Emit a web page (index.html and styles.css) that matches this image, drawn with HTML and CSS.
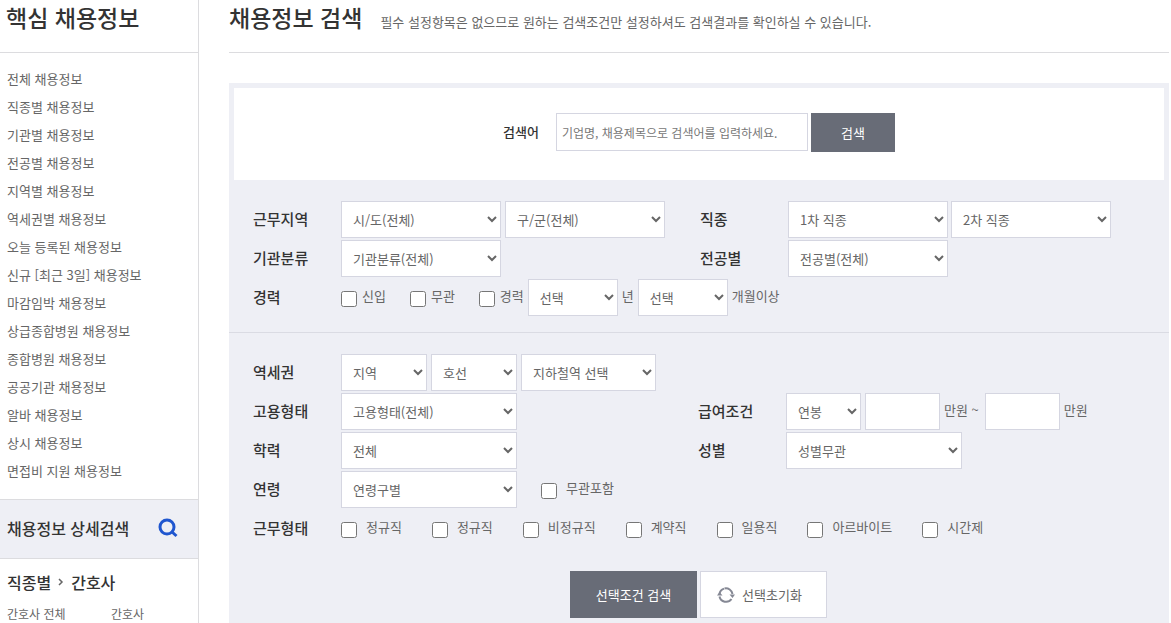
FILE: index.html
```html
<!DOCTYPE html>
<html lang="ko">
<head>
<meta charset="utf-8">
<title>채용정보 검색</title>
<link rel="stylesheet" href="styles.css">
</head>
<body>
<div class="page">
  <aside class="side">
    <h2 class="side-title">핵심 채용정보</h2>
    <ul class="side-menu">
      <li><a href="#">전체 채용정보</a></li>
      <li><a href="#">직종별 채용정보</a></li>
      <li><a href="#">기관별 채용정보</a></li>
      <li><a href="#">전공별 채용정보</a></li>
      <li><a href="#">지역별 채용정보</a></li>
      <li><a href="#">역세권별 채용정보</a></li>
      <li><a href="#">오늘 등록된 채용정보</a></li>
      <li><a href="#">신규 [최근 3일] 채용정보</a></li>
      <li><a href="#">마감임박 채용정보</a></li>
      <li><a href="#">상급종합병원 채용정보</a></li>
      <li><a href="#">종합병원 채용정보</a></li>
      <li><a href="#">공공기관 채용정보</a></li>
      <li><a href="#">알바 채용정보</a></li>
      <li><a href="#">상시 채용정보</a></li>
      <li><a href="#">면접비 지원 채용정보</a></li>
    </ul>
    <a class="side-search" href="#">채용정보 상세검색
      <svg width="20" height="20" viewBox="0 0 20 20" fill="none" stroke="#1f56cf" stroke-width="3"><circle cx="9" cy="9" r="7"/><path d="M13.500 13.500L18.500 18"/></svg>
    </a>
    <h3 class="side-sub">직종별
      <svg width="6" height="8" viewBox="0 0 6 8" fill="none" stroke="#666" stroke-width="1.500"><path d="M1 1l3 3-3 3"/></svg>
      간호사</h3>
    <div class="side-links"><a href="#">간호사 전체</a><a href="#">간호사</a></div>
  </aside>

  <main class="main">
    <header class="head">
      <h1>채용정보 검색</h1>
      <p>필수 설정항목은 없으므로 원하는 검색조건만 설정하셔도 검색결과를 확인하실 수 있습니다.</p>
    </header>
    <form class="panel">
      <div class="keyword">
        <label for="kw">검색어</label>
        <input id="kw" class="box" type="text" placeholder="기업명, 채용제목으로 검색어를 입력하세요.">
        <button class="dark" type="button">검색</button>
      </div>

      <section class="group group-top">
        <label class="name" for="sido">근무지역</label>
        <div class="field">
          <select id="sido" class="box w160"><option>시/도(전체)</option></select>
          <select aria-label="구/군" class="box w160"><option>구/군(전체)</option></select>
        </div>
        <label class="name" for="job1">직종</label>
        <div class="field tight">
          <select id="job1" class="box w160"><option>1차 직종</option></select>
          <select aria-label="2차 직종" class="box w160"><option>2차 직종</option></select>
        </div>
        <label class="name" for="org">기관분류</label>
        <div class="field"><select id="org" class="box w160"><option>기관분류(전체)</option></select></div>
        <label class="name" for="major">전공별</label>
        <div class="field"><select id="major" class="box w160"><option>전공별(전체)</option></select></div>
        <span class="name">경력</span>
        <div class="field wide">
          <div class="career">
            <label class="check"><input type="checkbox"><span>신입</span></label>
            <label class="check"><input type="checkbox"><span>무관</span></label>
            <label class="check"><input type="checkbox"><span>경력</span></label>
          </div>
          <select id="yr" class="box w90"><option>선택</option></select>
          <label class="unit" for="yr">년</label>
          <select id="mon" class="box w90"><option>선택</option></select>
          <label class="unit" for="mon">개월이상</label>
        </div>
      </section>

      <section class="group group-bottom">
        <label class="name" for="st">역세권</label>
        <div class="field wide">
          <select id="st" class="box w86"><option>지역</option></select>
          <select aria-label="호선" class="box w86"><option>호선</option></select>
          <select aria-label="지하철역" class="box w135"><option>지하철역 선택</option></select>
        </div>
        <label class="name" for="emp">고용형태</label>
        <div class="field"><select id="emp" class="box w176"><option>고용형태(전체)</option></select></div>
        <label class="name" for="pay">급여조건</label>
        <div class="field">
          <select id="pay" class="box w75"><option>연봉</option></select>
          <input id="pmin" class="box w75" type="text">
          <label class="unit" for="pmin">만원 ~</label>
          <input id="pmax" class="box w75" type="text">
          <label class="unit" for="pmax">만원</label>
        </div>
        <label class="name" for="edu">학력</label>
        <div class="field"><select id="edu" class="box w176"><option>전체</option></select></div>
        <label class="name" for="sex">성별</label>
        <div class="field"><select id="sex" class="box w176"><option>성별무관</option></select></div>
        <label class="name" for="age">연령</label>
        <div class="field wide age">
          <select id="age" class="box w176"><option>연령구별</option></select>
          <label class="check"><input type="checkbox"><span>무관포함</span></label>
        </div>
        <span class="name">근무형태</span>
        <div class="field wide types">
          <label class="check"><input type="checkbox"><span>정규직</span></label>
          <label class="check"><input type="checkbox"><span>정규직</span></label>
          <label class="check"><input type="checkbox"><span>비정규직</span></label>
          <label class="check"><input type="checkbox"><span>계약직</span></label>
          <label class="check"><input type="checkbox"><span>일용직</span></label>
          <label class="check"><input type="checkbox"><span>아르바이트</span></label>
          <label class="check"><input type="checkbox"><span>시간제</span></label>
        </div>
      </section>

      <div class="actions">
        <button class="dark" type="button">선택조건 검색</button>
        <button class="light" type="button">
          <svg width="18" height="18" viewBox="0 0 18 18" fill="none" stroke="#858894" stroke-width="2"><path d="M2.500 8A6.700 6.700 0 0 1 7 2.600"/><path d="M7.500 2.500A6.700 6.700 0 0 1 15.500 8"/><path d="M2.500 10.500A6.700 6.700 0 0 0 14.500 13"/><path d="M0 9.500L2.500 6l3 3.500zM12.500 8.500H18L15.500 12z" fill="#858894" stroke="none"/></svg>
          선택초기화</button>
      </div>
    </form>
  </main>
</div>
</body>
</html>
```
FILE: styles.css
```css
* { box-sizing: border-box; }
body {
  margin: 0;
  background: #fff;
  color: #666;
  font: 13px/20px "Noto Sans CJK KR", sans-serif;
}
h1, h2, h3, p, ul { margin: 0; padding: 0; }
ul { list-style: none; }
a { color: inherit; text-decoration: none; }
input, select, button { font: inherit; color: inherit; margin: 0; }

.page { display: flex; height: 100vh; overflow: hidden; }

.side { flex: 0 0 199px; border-right: 1px solid #dcdcdf; }
.side-title {
  height: 53px;
  padding-left: 6px;
  border-bottom: 1px solid #dcdcdf;
  color: #333;
  font-size: 23px;
  font-weight: 500;
  line-height: 35px;
}
.side-menu { padding: 12px 0 14px 7px; line-height: 28px; }
.side-search {
  display: flex;
  align-items: center;
  justify-content: space-between;
  height: 60px;
  padding: 0 20px 2px 7px;
  border: solid #dcdcdf;
  border-width: 1px 0;
  background: #eeeff5;
  color: #333;
  font-size: 16px;
  font-weight: 500;
}
.side-sub {
  display: flex;
  align-items: center;
  gap: 7px;
  padding: 11px 7px 10px;
  color: #333;
  font-size: 16px;
  font-weight: 500;
  line-height: 24px;
}
.side-links {
  display: grid;
  grid-template-columns: 104px 1fr;
  padding-left: 7px;
  font-size: 12px;
}

.main { flex: 1; display: flex; flex-direction: column; padding: 0 2px 0 30px; }
.head {
  display: flex;
  align-items: baseline;
  gap: 18px;
  flex: none;
  height: 53px;
  margin-bottom: 30px;
  border-bottom: 1px solid #dcdcdf;
}
.head h1 { color: #333; font-size: 23px; font-weight: 500; line-height: 35px; }

.panel { flex: 1 0 auto; background: #eeeff5; }
.keyword {
  display: flex;
  justify-content: center;
  align-items: flex-start;
  height: 97px;
  padding-top: 25px;
  border: solid #eeeff5;
  border-width: 5px 5px 0;
  background: #fff;
}
.keyword label { margin-right: 17px; color: #333; font-weight: 500; line-height: 38px; }
.keyword .box { width: 252px; height: 38px; margin-right: 3px; padding: 0 5px; font-size: 12px; }
.keyword .dark { width: 84px; height: 39px; }

.box { height: 37px; border: 1px solid #d5d6e1; border-radius: 0; background-color: #fff; }
.box::placeholder { color: #777; }
select.box { padding: 0 1px 1px 7px; }
.w75 { width: 75px; }
.w86 { width: 86px; }
.w90 { width: 90px; }
.w135 { width: 135px; }
.w160 { width: 160px; }
.w176 { width: 176px; }

.group { display: grid; row-gap: 2px; grid-auto-rows: 37px; padding: 21px 0 16px 24px; }
.group-top { grid-template-columns: 88px 359px 88px 1fr; border-bottom: 1px solid #dadbe3; }
.group-bottom { grid-template-columns: 88px 357px 88px 1fr; padding-bottom: 24px; }
.name { color: #333; font-size: 15px; font-weight: 500; line-height: 35px; }
.field { display: flex; gap: 4px; }
.tight { gap: 3px; }
.wide { grid-column: 2 / -1; }
.unit { line-height: 33px; }
.unit + input { margin-left: 2px; }

.check { display: flex; gap: 9px; line-height: 34px; }
.check input { flex: none; width: 16px; height: 16px; margin-top: 12px; }
.career { display: flex; gap: 24px; }
.career .check { gap: 5px; }
.age { gap: 24px; }
.types { gap: 30px; }

.actions { display: flex; justify-content: center; gap: 3px; padding-right: 1px; }
.actions button { width: 127px; height: 47px; }
.dark { border: 0; background: #686c77; color: #fff; }
.light {
  display: flex;
  align-items: center;
  justify-content: center;
  gap: 7px;
  padding: 0 12px 0 4px;
  border: 1px solid #d5d6e1;
  background: #fff;
}
```
